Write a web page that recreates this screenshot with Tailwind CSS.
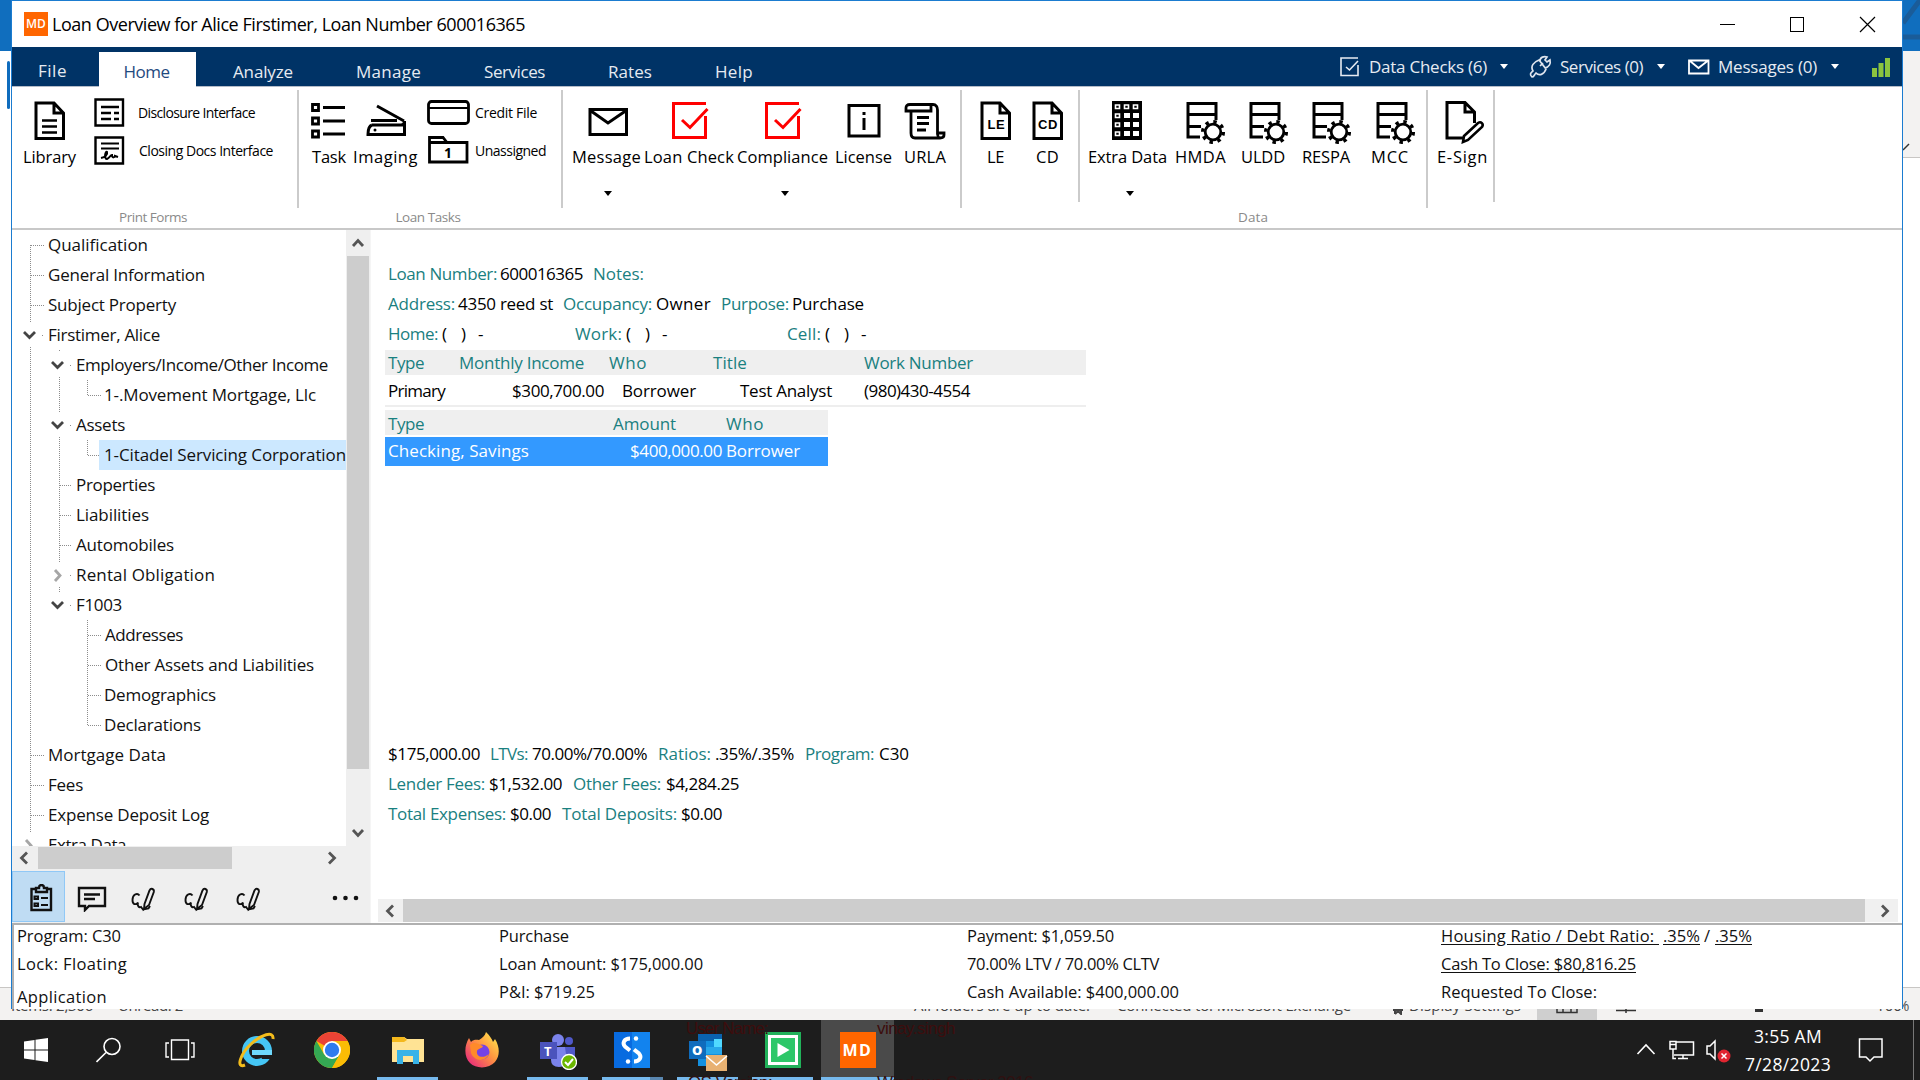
<!DOCTYPE html>
<html lang="en">
<head>
<meta charset="utf-8">
<title>Loan Overview</title>
<script src="https://cdn.jsdelivr.net/npm/@tailwindcss/browser@4"></script>
</head>
<body class="h-[1080px] w-[1920px] overflow-hidden bg-white font-['Open_Sans','Noto_Sans',sans-serif] text-[17px] leading-6 text-black">
<svg class="hidden">
  <symbol id="page" viewBox="0 0 44 44"><path d="M8 3H26L35.500 13V38.500H8Z M26 3V13H35.500" fill="none" stroke="#000" stroke-width="3"/></symbol>
  <symbol id="check" viewBox="0 0 44 44"><path d="M38 3.500H5.500V37.500H37.500V16M14 20L22 27.500L39.500 9" fill="none" stroke="#f00" stroke-width="3"/></symbol>
  <symbol id="dbgear" viewBox="0 0 44 44"><path d="M32 20V3.500H4V37H16M4 14.500H32M4 26.500H17" fill="none" stroke="#000" stroke-width="3"/><circle cx="29" cy="32" r="10.300" fill="none" stroke="#000" stroke-width="3.500" stroke-dasharray="3.400 4.690"/><circle cx="29" cy="32" r="7.800" fill="#fff" stroke="#000" stroke-width="2.800"/></symbol>
  <symbol id="pen" viewBox="0 0 28 26"><path d="M10.500 9.500C8 6 3.500 9 3.500 14C3.500 19 7 19 9 16.500C8 20 10 22 12 21L14 23.500L19.500 22.500L21 20" fill="none" stroke="#111" stroke-width="1.900"/><path d="M15.500 18L20.500 4.500C22 1.500 25.500 3 24.800 6L20 19L15 23Z" fill="none" stroke="#111" stroke-width="1.900"/></symbol>
</svg>

<div class="relative flex h-[1020px] w-[1920px]">
  <!-- mail client behind, left edge -->
  <div class="flex w-[11px] flex-col">
    <div class="h-[51px] bg-[#106ebe]"></div>
    <div class="mt-[10px] ml-[7px] h-[48px] w-[3px] rounded bg-[#0f6cbd]"></div>
    <div class="mt-[878px] h-[33px] border-t border-[#c8c6c4] bg-[#f3f2f1]"></div>
  </div>

  <div class="flex w-[1892px] flex-col">
    <main class="flex h-[1009px] w-[1892px] flex-col overflow-hidden border-x border-t border-[#1b7cd0] bg-white">
      <!-- title bar -->
      <header class="flex h-[46px] shrink-0 items-center">
        <div class="ml-[12px] flex h-6 w-6 items-center justify-center bg-[#ff6600] text-[12px] font-semibold text-white">MD</div>
        <div class="fit ml-[4px] w-[473px] text-[18px]">Loan Overview for Alice Firstimer, Loan Number 600016365</div>
        <svg class="ml-[1194px] h-[20px] w-[160px]" fill="none" stroke="#000" shape-rendering="crispEdges"><path d="M1 10.500H16M71.500 3.500H84.500V17.500H71.500Z"/><path d="M141 3L156 18M156 3L141 18" shape-rendering="auto" stroke-width="1.200"/></svg>
      </header>

      <!-- menu tabs -->
      <nav class="flex h-[40px] shrink-0 items-center border-b border-[#b4bcc8] bg-[#003366] text-[#e6ebf2]">
        <span class="fit mt-[8px] ml-[26px] w-[29px]">File</span>
        <span class="mt-[6px] ml-[32px] flex h-[35px] w-[97px] items-center justify-center bg-white pt-[4px] pr-[2px] text-[#1f4a80]"><span class="fit w-[46px]">Home</span></span>
        <span class="fit mt-[10px] ml-[37px] w-[60px]">Analyze</span>
        <span class="fit mt-[10px] ml-[63px] w-[65px]">Manage</span>
        <span class="fit mt-[10px] ml-[63px] w-[61px]">Services</span>
        <span class="fit mt-[10px] ml-[63px] w-[44px]">Rates</span>
        <span class="fit mt-[10px] ml-[63px] w-[38px]">Help</span>
        <svg class="ml-[587px] h-5 w-5" fill="none" stroke="#e6ebf2" stroke-width="1.600"><path d="M18 1H1V18.500H18V8M6 10L9.500 13L18 4"/></svg>
        <span class="fit ml-[9px] w-[118px]">Data Checks (6)</span>
        <svg class="ml-[13px] h-[5px] w-2" fill="#fff"><path d="M0 0H8L4 5Z"/></svg>
        <svg class="ml-[21px] h-6 w-[23px]" fill="none" stroke="#dfe5ee" stroke-width="1.700"><path d="M3 22C0 19 2 18 4 16C1 11 5 7 10 5L17 14C15 20 10 21 7 18C5 20 5 22 3 22ZM11 6C11 2 15 1 18 2L16 5L18 7L21 5C22 9 20 12 16 13M14 8L11 11"/></svg>
        <span class="fit ml-[8px] w-[83px]">Services (0)</span>
        <svg class="ml-[14px] h-[5px] w-2" fill="#fff"><path d="M0 0H8L4 5Z"/></svg>
        <svg class="ml-[23px] h-4 w-[22px]" fill="none" stroke="#fff" stroke-width="1.800"><path d="M1 1.500H20.500V14.500H1ZM2 2L10.500 9L19.500 2"/></svg>
        <span class="fit ml-[8px] w-[99px]">Messages (0)</span>
        <svg class="ml-[14px] h-[5px] w-2" fill="#fff"><path d="M0 0H8L4 5Z"/></svg>
        <svg class="ml-[33px] h-5 w-[19px]" fill="#8bc53f"><path d="M0 11H5V20H0ZM6.500 6H11.500V20H6.500ZM13 1H18V20H13Z"/></svg>
      </nav>

      <!-- ribbon -->
      <section class="flex h-[143px] shrink-0 border-b-2 border-[#c8c8c8] text-[16.5px]">
        <div class="w-[285px]">
          <div class="flex h-[118px] pt-[13px]">
            <div class="ml-[11px] flex w-[53px] flex-col items-center"><svg class="h-11 w-11" fill="none" stroke="#000" stroke-width="3"><use href="#page"/><path d="M14 20.500H29M14 26.500H29M14 32.500H29" stroke-width="2.500"/></svg><span class="fit mt-px w-[53px]">Library</span></div>
            <div class="-mt-[2px] ml-[18px] flex flex-col gap-[9px] text-[14px]">
              <div class="flex h-[29px] items-center"><svg class="h-[29px] w-[31px]" fill="none" stroke="#000" stroke-width="2.400"><path d="M1.500 1.500H29V27.500H1.500Z"/><path d="M7 9H25M7 15H17M20 15H25M7 21H17M20 21H25"/></svg><span class="fit ml-[13px] w-[117px]">Disclosure Interface</span></div>
              <div class="flex h-[29px] items-center"><svg class="h-[29px] w-[31px]" fill="none" stroke="#000" stroke-width="2.400"><path d="M1.500 1.500H29V27.500H1.500Z"/><path d="M7 7.500H25M7 12.500H25M7 22C11 21 14 19 13 16C11 15 10 23 13 23C16 22 16 19 18 19C18 23 21 21 21 20L24 21" stroke-width="2"/></svg><span class="fit ml-[14px] w-[134px]">Closing Docs Interface</span></div>
            </div>
          </div>
          <div class="flex justify-center pr-[3px] text-[13.5px] text-[#8a8a8a]"><span class="fit w-[68px]">Print Forms</span></div>
        </div>
        <div class="mt-[3px] h-[118px] w-[2px] bg-[#cbcbcb]"></div>
        <div class="w-[262px]">
          <div class="flex h-[118px] pt-[13px]">
            <div class="ml-[13px] flex w-[34px] flex-col items-center"><svg class="h-11 w-11 shrink-0" fill="none" stroke="#000" stroke-width="2.800"><path d="M5.500 5.500H11.500V11.500H5.500ZM5.500 19H11.500V25H5.500ZM5.500 32H11.500V38H5.500ZM16 8.500H38M16 22H38M16 35H38" transform="translate(0 -1)"/></svg><span class="fit mt-px w-[34px]">Task</span></div>
            <div class="ml-[7px] flex w-[65px] flex-col items-center"><svg class="h-11 w-11" fill="none" stroke="#000" stroke-width="3"><path d="M13 6L40 21M7 20.500H33M8 25H37Q40.500 25 40.500 21M8 25C5 26 4 30 4 34.500H40.500V21"/><circle cx="11" cy="30" r="1.500" fill="#000" stroke="none"/></svg><span class="fit mt-px w-[65px]">Imaging</span></div>
            <div class="-mt-[2px] ml-[9px] flex flex-col gap-[9px] text-[14px]">
              <div class="flex h-[29px] items-center"><svg class="h-[29px] w-[44px]" fill="none" stroke="#000" stroke-width="2.800"><rect x="1.500" y="3.500" width="40" height="22" rx="3"/><path d="M2 10H41" stroke-width="2.200"/></svg><span class="fit ml-[4px] w-[62px]">Credit File</span></div>
              <div class="flex h-[29px] items-center"><svg class="h-[29px] w-[44px]" fill="none" stroke="#000" stroke-width="2.800"><path d="M2.500 6.500H40V26H2.500V1.500H16L20 6.500"/><path d="M3 6.500H20" stroke-width="2"/><text x="17" y="22" font-family="Open Sans" font-size="14" font-weight="700" fill="#000" stroke="none">1</text></svg><span class="fit ml-[4px] w-[71px]">Unassigned</span></div>
            </div>
          </div>
          <div class="flex justify-center pr-[4px] text-[13.5px] text-[#8a8a8a]"><span class="fit w-[65px]">Loan Tasks</span></div>
        </div>
        <div class="mt-[3px] h-[118px] w-[2px] bg-[#cbcbcb]"></div>
        <div class="flex w-[397px] pt-[13px]">
          <div class="ml-[9px] flex w-[69px] flex-col items-center"><svg class="ml-[2px] h-11 w-11" fill="none" stroke="#000" stroke-width="3"><path d="M4 9.500H40.500V34.500H4ZM5 11L22 23L39.500 11"/></svg><span class="fit mt-px w-[69px]">Message</span><svg class="mt-[22px] ml-[2px] h-[5px] w-2"><path d="M0 0H8L4 5Z"/></svg></div>
          <div class="ml-[3px] flex w-[90px] flex-col items-center"><svg class="ml-[2px] h-11 w-11"><use href="#check"/></svg><span class="fit mt-px w-[90px]">Loan Check</span></div>
          <div class="ml-[3px] flex w-[91px] flex-col items-center"><svg class="h-11 w-11"><use href="#check"/></svg><span class="fit mt-px w-[91px]">Compliance</span><svg class="mt-[22px] ml-[4px] h-[5px] w-2"><path d="M0 0H8L4 5Z"/></svg></div>
          <div class="ml-[7px] flex w-[57px] flex-col items-center"><svg class="h-11 w-11" fill="none" stroke="#000" stroke-width="3"><path d="M7 5.500H37V36H7ZM22 18V30M22 12V15"/></svg><span class="fit mt-px w-[57px]">License</span></div>
          <div class="ml-[12px] flex w-[42px] flex-col items-center"><svg class="h-11 w-11 shrink-0" fill="none" stroke="#000" stroke-width="2.800"><path d="M30 4.500H7C4 4.500 3 6 3 8V11H28V5M30 4.500C33 4.500 34.500 7 34.500 10V33H41V35C41 37 40 38 37 38H12C9 38 8 36 8 33V12M34.500 32C34.500 36 35 38 37 38M14 17.500H26M14 23.500H26M14 30H23"/></svg><span class="fit mt-px w-[42px]">URLA</span></div>
        </div>
        <div class="mt-[3px] h-[118px] w-[2px] bg-[#cbcbcb]"></div>
        <div class="flex w-[116px] pt-[13px]">
          <div class="ml-[25px] flex w-[17px] flex-col items-center"><svg class="h-11 w-11 shrink-0"><use href="#page"/><text x="13.500" y="29" font-family="Liberation Sans" font-size="13" font-weight="700" letter-spacing="0.500">LE</text></svg><span class="fit mt-px w-[17px]">LE</span></div>
          <div class="ml-[32px] flex w-[23px] flex-col items-center"><svg class="h-11 w-11 shrink-0"><use href="#page"/><text x="12" y="29" font-family="Liberation Sans" font-size="13" font-weight="700" letter-spacing="0.500">CD</text></svg><span class="fit mt-px w-[23px]">CD</span></div>
        </div>
        <div class="mt-[3px] h-[112px] w-[2px] bg-[#cbcbcb]"></div>
        <div class="w-[346px]">
          <div class="flex h-[118px] pt-[13px]">
            <div class="ml-[8px] flex w-[79px] flex-col items-center"><svg class="h-11 w-11"><path d="M6 1H36V40H6Z"/><path d="M9.500 5h4v3.500h-4zM18.500 5h4v3.500h-4zM27.500 5h4v3.500h-4zM9.500 14h4v3.500h-4zM9.500 23h4v3.500h-4zM9.500 32h4v3.500h-4z" fill="#000" stroke="#fff" stroke-width="1.600"/><path d="M18 13h6v5h-6zM27 13h6v5h-6zM18 22h6v5h-6zM27 22h6v5h-6zM18 31h6v5h-6zM27 31h6v5h-6z" fill="#fff"/></svg><span class="fit mt-px w-[79px]">Extra Data</span><svg class="mt-[22px] ml-[4px] h-[5px] w-2"><path d="M0 0H8L4 5Z"/></svg></div>
            <div class="ml-[8px] flex w-[51px] flex-col items-center"><svg class="ml-[10px] h-11 w-11 shrink-0"><use href="#dbgear"/></svg><span class="fit mt-px w-[51px]">HMDA</span></div>
            <div class="ml-[15px] flex w-[44px] flex-col items-center"><svg class="ml-[11px] h-11 w-11 shrink-0"><use href="#dbgear"/></svg><span class="fit mt-px w-[44px]">ULDD</span></div>
            <div class="ml-[17px] flex w-[48px] flex-col items-center"><svg class="ml-[11px] h-11 w-11 shrink-0"><use href="#dbgear"/></svg><span class="fit mt-px w-[48px]">RESPA</span></div>
            <div class="ml-[21px] flex w-[38px] flex-col items-center"><svg class="ml-[11px] h-11 w-11 shrink-0"><use href="#dbgear"/></svg><span class="fit mt-px w-[38px]">MCC</span></div>
          </div>
          <div class="flex justify-center text-[13.5px] text-[#8a8a8a]"><span class="fit w-[30px]">Data</span></div>
        </div>
        <div class="mt-[3px] h-[118px] w-[2px] bg-[#cbcbcb]"></div>
        <div class="flex w-[65px] pt-[13px]">
          <div class="ml-[9px] flex w-[51px] flex-col items-center"><svg class="ml-[5px] h-11 w-11" fill="none" stroke="#000" stroke-width="3"><path d="M23 38H4V2.500H22L31.500 12V23M22 2.500V12H31.500"/><path d="M21 36L35 23C38 21 41 24 39 27L25 40L20 42Z" fill="#fff" stroke-width="2.600"/></svg><span class="fit mt-px w-[51px]">E-Sign</span></div>
        </div>
        <div class="mt-[3px] h-[112px] w-[2px] bg-[#cbcbcb]"></div>
      </section>

      <!-- work area -->
      <div class="flex h-[693px] shrink-0">
        <aside class="flex w-[358px] flex-col bg-[#efefef] text-[#111]">
          <div class="flex h-[616px]">
            <div class="relative h-[616px] w-[334px] overflow-hidden bg-white">
              <svg class="absolute top-0 left-0 h-[616px] w-[334px]" fill="none">
                <g stroke="#8c8c8c" stroke-width="1" stroke-dasharray="1 1" shape-rendering="crispEdges"><path d="M18.500 15V92M18.500 117V603M47.500 120V122M47.500 147V182M47.500 207V333M47.500 357V362M75.500 150V166M75.500 210V226M75.500 390V496"/><path d="M19 15.500H32M19 45.500H32M19 75.500H32M30 105.500H32M58 135.500H60M76 165.500H89M58 195.500H60M76 225.500H89M48 255.500H60M48 285.500H60M48 315.500H60M58 345.500H60M58 375.500H60M76 405.500H89M76 435.500H89M76 465.500H89M76 495.500H89M19 525.500H32M19 555.500H32M19 585.500H32"/></g>
                <g stroke="#444" stroke-width="2.800"><path d="M12 102L17.500 107.500L23 102M40 132L45.500 137.500L51 132M40 192L45.500 197.500L51 192M40 372L45.500 377.500L51 372"/><path d="M43 340L48 345.500L43 351M14 610L19 615.500L14 621" stroke="#a6a6a6"/></g>
              </svg>
              <div class="relative flex flex-col">
                <div class="flex h-[30px] items-center pl-[36px]"><span class="fit w-[100px]">Qualification</span></div>
                <div class="flex h-[30px] items-center pl-[36px]"><span class="fit w-[157px]">General Information</span></div>
                <div class="flex h-[30px] items-center pl-[36px]"><span class="fit w-[128px]">Subject Property</span></div>
                <div class="flex h-[30px] items-center pl-[36px]"><span class="fit w-[112px]">Firstimer, Alice</span></div>
                <div class="flex h-[30px] items-center pl-[64px]"><span class="fit w-[252px]">Employers/Income/Other Income</span></div>
                <div class="flex h-[30px] items-center pl-[92px]"><span class="fit w-[212px]">1-.Movement Mortgage, Llc</span></div>
                <div class="flex h-[30px] items-center pl-[64px]"><span class="fit w-[49px]">Assets</span></div>
                <div class="ml-[87px] flex h-[30px] items-center bg-[#cce8ff] pl-[5px]"><span class="fit w-[242px]">1-Citadel Servicing Corporation</span></div>
                <div class="flex h-[30px] items-center pl-[64px]"><span class="fit w-[79px]">Properties</span></div>
                <div class="flex h-[30px] items-center pl-[64px]"><span class="fit w-[73px]">Liabilities</span></div>
                <div class="flex h-[30px] items-center pl-[64px]"><span class="fit w-[98px]">Automobiles</span></div>
                <div class="flex h-[30px] items-center pl-[64px]"><span class="fit w-[139px]">Rental Obligation</span></div>
                <div class="flex h-[30px] items-center pl-[64px]"><span class="fit w-[46px]">F1003</span></div>
                <div class="flex h-[30px] items-center pl-[93px]"><span class="fit w-[78px]">Addresses</span></div>
                <div class="flex h-[30px] items-center pl-[93px]"><span class="fit w-[209px]">Other Assets and Liabilities</span></div>
                <div class="flex h-[30px] items-center pl-[92px]"><span class="fit w-[112px]">Demographics</span></div>
                <div class="flex h-[30px] items-center pl-[92px]"><span class="fit w-[97px]">Declarations</span></div>
                <div class="flex h-[30px] items-center pl-[36px]"><span class="fit w-[118px]">Mortgage Data</span></div>
                <div class="flex h-[30px] items-center pl-[36px]"><span class="fit w-[35px]">Fees</span></div>
                <div class="flex h-[30px] items-center pl-[36px]"><span class="fit w-[161px]">Expense Deposit Log</span></div>
                <div class="flex h-[30px] items-center pl-[36px]"><span class="fit w-[78px]">Extra Data</span></div>
              </div>
            </div>
            <div class="flex w-[24px] flex-col items-center">
              <svg class="h-[26px] w-[22px]" fill="none" stroke="#555" stroke-width="2.800"><path d="M6 16L11 10.500L16 16"/></svg>
              <div class="h-[513px] w-[22px] bg-[#cdcdcd]"></div>
              <svg class="mt-[51px] h-[26px] w-[22px]" fill="none" stroke="#555" stroke-width="2.800"><path d="M6 10L11 15.500L16 10"/></svg>
            </div>
          </div>
          <div class="flex h-[24px] items-center">
            <svg class="h-[22px] w-[26px]" fill="none" stroke="#555" stroke-width="2.800"><path d="M15 5.500L9.500 11L15 16.500"/></svg>
            <div class="h-[22px] w-[194px] bg-[#cdcdcd]"></div>
            <svg class="ml-[88px] h-[22px] w-[26px]" fill="none" stroke="#555" stroke-width="2.800"><path d="M9 5.500L14.500 11L9 16.500"/></svg>
          </div>
          <div class="flex h-[53px] items-center">
            <div class="flex h-[51px] w-[53px] items-center justify-center border border-[#90c8f6] bg-[#bfdcf3] pt-[2px] pl-[5px]"><svg class="h-[28px] w-[24px]" fill="none" stroke="#111" stroke-width="2.400"><path d="M7 5H2.500V26H22V5H18M7 8V4H10C10 0 15 0 15 4H18V8Z"/><path d="M5.500 12.500H9V15H5.500ZM12 14H19M5.500 19.500H9V22H5.500ZM12 21H19" stroke-width="2"/></svg></div>
            <svg class="mt-[3px] ml-[12px] h-[28px] w-[30px]" fill="none" stroke="#111" stroke-width="2.400"><path d="M2 4H28V22H12L8 26V22H2ZM7 10.500H23M7 15H18"/></svg>
            <svg class="mt-[4px] ml-[22px] h-[26px] w-[28px]"><use href="#pen"/></svg>
            <svg class="mt-[4px] ml-[25px] h-[26px] w-[28px]"><use href="#pen"/></svg>
            <svg class="mt-[4px] ml-[24px] h-[26px] w-[28px]"><use href="#pen"/></svg>
            <svg class="mt-[3px] ml-[70px] h-[6px] w-[28px]" fill="#111"><circle cx="3" cy="3" r="2.300"/><circle cx="13.500" cy="3" r="2.300"/><circle cx="24" cy="3" r="2.300"/></svg>
          </div>
        </aside>

        <section class="flex w-[1532px] flex-col border-l border-[#f5f5f5] pt-[29px] text-[#1a8080]">
          <div class="flex h-[30px] items-center pl-[17px]"><span class="fit w-[109px]">Loan Number:</span><span class="fit ml-[3px] w-[83px] text-black">600016365</span><span class="fit ml-[10px] w-[51px]">Notes:</span></div>
          <div class="flex h-[30px] items-center pl-[17px]"><span class="fit w-[67px]">Address:</span><span class="fit ml-[3px] w-[95px] text-black">4350 reed st</span><span class="fit ml-[10px] w-[89px]">Occupancy:</span><span class="fit ml-[4px] w-[55px] text-black">Owner</span><span class="fit ml-[10px] w-[68px]">Purpose:</span><span class="fit ml-[3px] w-[72px] text-black">Purchase</span></div>
          <div class="flex h-[30px] items-center pl-[17px]"><span class="fit w-[50px]">Home:</span><span class="ml-[4px] flex w-[24px] justify-between text-black"><span>(</span><span>)</span></span><span class="ml-[12px] w-[6px] text-black">-</span><span class="fit ml-[91px] w-[47px]">Work:</span><span class="ml-[4px] flex w-[24px] justify-between text-black"><span>(</span><span>)</span></span><span class="ml-[12px] w-[6px] text-black">-</span><span class="fit ml-[119px] w-[34px]">Cell:</span><span class="ml-[4px] flex w-[24px] justify-between text-black"><span>(</span><span>)</span></span><span class="ml-[12px] w-[6px] text-black">-</span></div>
          <div class="mt-px ml-[14px] flex h-[25px] w-[701px] items-center bg-[#efefef] pt-px pl-[3px]"><span class="fit w-[36px]">Type</span><span class="fit ml-[35px] w-[125px]">Monthly Income</span><span class="fit ml-[25px] w-[38px]">Who</span><span class="fit ml-[66px] w-[34px]">Title</span><span class="fit ml-[117px] w-[109px]">Work Number</span></div>
          <div class="ml-[14px] flex h-[32px] w-[701px] items-center border-b-2 border-[#eee] pt-px pl-[3px] text-black"><span class="fit w-[57px]">Primary</span><span class="fit ml-[67px] w-[92px]">$300,700.00</span><span class="fit ml-[18px] w-[74px]">Borrower</span><span class="fit ml-[44px] w-[92px]">Test Analyst</span><span class="fit ml-[32px] w-[106px]">(980)430-4554</span></div>
          <div class="mt-[3px] ml-[14px] flex h-[25px] w-[443px] items-center bg-[#efefef] pt-[2px] pl-[3px]"><span class="fit w-[36px]">Type</span><span class="fit ml-[189px] w-[63px]">Amount</span><span class="fit ml-[50px] w-[38px]">Who</span></div>
          <div class="mt-[2px] ml-[14px] flex h-[29px] w-[443px] items-center bg-[#3399ff] pb-[2px] pl-[3px] text-white"><span class="fit w-[141px]">Checking, Savings</span><span class="fit ml-[101px] w-[92px]">$400,000.00</span><span class="fit ml-[4px] w-[74px]">Borrower</span></div>
          <div class="mt-[273px] flex h-[30px] items-center pl-[17px]"><span class="fit w-[92px] text-black">$175,000.00</span><span class="fit ml-[10px] w-[38px]">LTVs:</span><span class="fit ml-[4px] w-[115px] text-black">70.00%/70.00%</span><span class="fit ml-[11px] w-[53px]">Ratios:</span><span class="fit ml-[4px] w-[79px] text-black">.35%/.35%</span><span class="fit ml-[11px] w-[69px]">Program:</span><span class="fit ml-[5px] w-[30px] text-black">C30</span></div>
          <div class="flex h-[30px] items-center pl-[17px]"><span class="fit w-[97px]">Lender Fees:</span><span class="fit ml-[4px] w-[73px] text-black">$1,532.00</span><span class="fit ml-[11px] w-[88px]">Other Fees:</span><span class="fit ml-[5px] w-[73px] text-black">$4,284.25</span></div>
          <div class="flex h-[30px] items-center pl-[17px]"><span class="fit w-[118px]">Total Expenses:</span><span class="fit ml-[4px] w-[41px] text-black">$0.00</span><span class="fit ml-[11px] w-[115px]">Total Deposits:</span><span class="fit ml-[4px] w-[41px] text-black">$0.00</span></div>
          <div class="mt-[70px] ml-[7px] flex h-[23px] w-[1520px] items-center bg-[#f0f0f0]">
            <svg class="h-[22px] w-[25px]" fill="none" stroke="#555" stroke-width="2.800"><path d="M15 5.500L9.500 11L15 16.500"/></svg>
            <div class="h-[23px] w-[1462px] bg-[#cdcdcd]"></div>
            <svg class="h-[22px] w-[32px]" fill="none" stroke="#555" stroke-width="2.800"><path d="M17 5.500L22.500 11L17 16.500"/></svg>
          </div>
        </section>
      </div>

      <!-- loan summary -->
      <footer class="flex h-[86px] shrink-0 border-t-2 border-l-2 border-[#b0b0b0] text-[16.5px] text-[#111]">
        <div class="-mt-px flex w-[482px] flex-col pl-[3px]"><span class="fit w-[104px]">Program: C30</span><span class="fit mt-[4px] w-[110px]">Lock: Floating</span><span class="fit mt-[9px] w-[90px]">Application</span></div>
        <div class="-mt-px flex w-[468px] flex-col gap-[4px] pl-[3px]"><span class="fit w-[70px]">Purchase</span><span class="fit w-[204px]">Loan Amount: $175,000.00</span><span class="fit w-[96px]">P&amp;I: $719.25</span></div>
        <div class="-mt-px flex w-[474px] flex-col gap-[4px] pl-[3px]"><span class="fit w-[147px]">Payment: $1,059.50</span><span class="fit w-[192px]">70.00% LTV / 70.00% CLTV</span><span class="fit w-[212px]">Cash Available: $400,000.00</span></div>
        <div class="-mt-px flex flex-col gap-[4px] pl-[3px]"><span class="flex"><span class="fit w-[218px] underline underline-offset-2">Housing Ratio / Debt Ratio:&nbsp;</span><span class="fit ml-[4px] w-[37px] underline underline-offset-2">.35%</span><span class="ml-[4px] w-[7px]">/</span><span class="fit ml-[4px] w-[37px] underline underline-offset-2">.35%</span></span><span class="fit w-[195px] underline underline-offset-2">Cash To Close: $80,816.25</span><span class="fit w-[156px]">Requested To Close:</span></div>
      </footer>
    </main>

    <!-- mail client status bar, mostly covered -->
    <div class="flex h-[11px] w-[1892px] overflow-hidden bg-[#f3f2f1] text-[15px] leading-5 text-[#444]">
      <span class="fit -mt-[14px] w-[82px]">Items: 2,306</span><span class="fit -mt-[14px] ml-[25px] w-[65px]">Unread: 2</span>
      <span class="fit -mt-[14px] ml-[731px] w-[176px]">All folders are up to date.</span><span class="fit -mt-[14px] ml-[27px] w-[234px]">Connected to: Microsoft Exchange</span>
      <svg class="ml-[41px] h-[6px] w-[12px]" fill="none" stroke="#444" stroke-width="2"><path d="M1 1H11M3 1V5M9 1V5L6 2L3 5"/></svg>
      <span class="fit -mt-[14px] ml-[5px] w-[112px]">Display Settings</span>
      <span class="ml-[16px] flex w-[60px] justify-center bg-[#cfcfcf]"><svg class="h-[5px] w-[22px]" fill="none" stroke="#333" stroke-width="1.500"><path d="M1 0V3.500H21V0M7 0V3M15 0V3"/></svg></span>
      <svg class="ml-[19px] h-[5px] w-[20px]" fill="none" stroke="#333" stroke-width="1.500"><path d="M0 1.500H20M10 0V4"/></svg>
      <span class="ml-[119px] h-[3px] w-[8px] bg-[#333]"></span>
      <span class="fit -mt-[14px] ml-[113px] w-[26px]">100</span>
    </div>
  </div>

  <!-- mail client behind, right edge -->
  <div class="flex w-[17px] flex-col">
    <svg class="h-[51px] w-[17px] bg-[#106ebe]" fill="none" stroke="#1a5c99" stroke-width="5"><path d="M0 23L17 0M0 37H17"/></svg>
    <div class="flex h-[107px] items-end border-b border-[#c8c6c4] bg-[#f3f2f1] pb-[6px]"><svg class="h-[8px] w-[8px]" fill="none" stroke="#333" stroke-width="1.500"><path d="M0 7L6 1"/></svg></div>
    <div class="mt-[829px] flex h-[33px] justify-start overflow-hidden border-t border-[#c8c6c4] bg-[#f3f2f1] pt-[7px] text-[15px] leading-5 text-[#555]"><span class="-ml-[6px]">%</span></div>
  </div>
</div>

<!-- taskbar -->
<div class="relative flex h-[60px] w-[1920px] items-center overflow-hidden bg-[#1d1d1d] text-white">
  <div class="absolute top-0 left-[686px] flex w-[400px] font-['Liberation_Sans',sans-serif] text-[17px] leading-[18px] text-[#3d0d0d]"><span class="fit w-[82px]">User Name:</span><span class="fit ml-[109px] w-[78px]">vinay.singh</span></div>
  <div class="absolute top-[54px] left-[688px] flex w-[400px] font-['Liberation_Sans',sans-serif] text-[17px] leading-[18px] text-[#301010]"><span class="fit w-[84px]">OS Version:</span><span class="fit ml-[105px] w-[156px]">Windows Server 2016</span></div>
  <svg class="ml-[24px] h-6 w-6" fill="#fff"><path d="M0 3.500L10.500 2V11.500H0ZM11.500 1.800L24 0V11.500H11.500ZM0 12.500H10.500V22L0 20.500ZM11.500 12.500H24V24L11.500 22.200Z"/></svg>
  <svg class="ml-[48px] h-[26px] w-[26px]" fill="none" stroke="#fff" stroke-width="1.600"><circle cx="16" cy="9.500" r="8"/><path d="M10 15.500L0.500 25"/></svg>
  <svg class="ml-[43px] h-[22px] w-[30px]" fill="none" stroke="#fff" stroke-width="1.400"><path d="M6.500 1H23.500V20.500H6.500ZM4 4H1V18H4M26 4H29V18H26"/></svg>
  <svg class="ml-[43px] h-[36px] w-[38px]" fill="none"><circle cx="19" cy="19" r="11.500" stroke="#45c6f5" stroke-width="7"/><path d="M14 20.500H34" stroke="#6fd8fb" stroke-width="5"/><path d="M22 23H35V27H24Z" fill="#1d1d1d"/><path d="M7 33C-3 37 3 21 13 12C23 3 36 -2 35 7" stroke="#f3bc1c" stroke-width="3"/></svg>
  <svg class="ml-[38px] h-9 w-9" viewBox="0 0 36 36"><circle cx="18" cy="18" r="18" fill="#fbbc05"/><path d="M18 18L2.400 9A18 18 0 0 1 33.600 9H18Z" fill="#ea4335"/><path d="M18 36A18 18 0 0 1 2.400 9L10.200 22.500L18 27L25.800 22.500Z" fill="#34a853"/><path d="M18 36L25.800 22.500A9 9 0 0 0 18 9H33.600A18 18 0 0 1 18 36Z" fill="#fbbc05"/><circle cx="18" cy="18" r="9" fill="#fff"/><circle cx="18" cy="18" r="7.200" fill="#2f7bee"/></svg>
  <div class="ml-[27px] flex h-[60px] w-[61px] justify-center border-b-3 border-[#76b9ed] pt-[16px]"><svg class="h-[28px] w-[32px]"><path d="M0 2Q0 1 1 1H12L15 3H32V26H0Z" fill="#ffe394"/><path d="M0 1H12L15 4L12 6H0Z" fill="#f4b81c"/><path d="M5 28V14H27V28H21V20H11V28Z" fill="#38b3e8"/></svg></div>
  <svg class="ml-[27px] h-[36px] w-[34px]"><defs><linearGradient id="ff" x1="1" y1="0" x2="0" y2="1"><stop offset="0" stop-color="#fff44f"/><stop offset=".45" stop-color="#ff9640"/><stop offset="1" stop-color="#e31587"/></linearGradient></defs><path d="M21 0C25 4 27 7 28 10L30 7C35 15 35 24 30 30C24 37 11 37 5 31C-1 25 -1 14 4 6L6 10C9 7 12 8 14 8C17 6 20 4 21 0Z" fill="url(#ff)"/><circle cx="17" cy="20" r="7.500" fill="#7542e5"/><path d="M5 13C9 9 13 12 18 14C17 17 13 16 12 19C11 25 18 27 24 22C20 31 9 29 6 21Z" fill="#ff8a2a"/></svg>
  <div class="ml-[28px] flex h-[60px] w-[61px] justify-center border-b-3 border-[#76b9ed] pt-[14px]"><svg class="h-[36px] w-[38px]"><circle cx="19" cy="6" r="6" fill="#7b83eb"/><circle cx="30" cy="7" r="4" fill="#5059c9"/><path d="M12 13H28V26Q28 33 20 33Q12 33 12 26Z" fill="#7b83eb"/><path d="M26 13H36V23Q36 29 28 28Z" fill="#5059c9"/><path d="M1 8H18V25H1Z" fill="#4b53bc"/><text x="5" y="21.500" font-family="Open Sans" font-size="13" font-weight="700" fill="#fff">T</text><circle cx="30" cy="28" r="7.500" fill="#6bb700" stroke="#fff" stroke-width="1.300"/><path d="M26 28L29 31L34 25" fill="none" stroke="#fff" stroke-width="2"/></svg></div>
  <div class="ml-[14px] flex h-[60px] w-[48px] justify-end border-b-3 border-[#76b9ed] pt-[12px]"><svg class="h-9 w-9 bg-[#1283ee]" fill="none" stroke="#fff" stroke-width="4"><path d="M0 0H18V36H0Z" fill="#086be0" stroke="none"/><path d="M16 6.500C10 6.500 8 11 11 14.500L16 18.500M20 29.500C26 29.500 28 25 25 21.500L20 17.500"/><circle cx="22" cy="6.500" r="2.200" fill="#fff" stroke="none"/><circle cx="14" cy="29.500" r="2.200" fill="#fff" stroke="none"/></svg></div>
  <div class="h-[60px] w-[13px] border-b-3 border-[#5a87b0]"></div>
  <div class="ml-[14px] flex h-[60px] w-[61px] justify-center border-b-3 border-[#76b9ed] pt-[14px]"><svg class="h-[38px] w-[40px]"><path d="M10 0H34V32H10Z" fill="#1490df"/><path d="M10 0H34V7H10Z" fill="#0a62ae"/><path d="M26 5H34V13H26Z" fill="#50d9ff"/><path d="M18 13H34V20H18Z" fill="#28a8ea"/><path d="M1 7H18V25H1Z" fill="#0f6cbd"/><text x="4" y="20.500" font-family="Open Sans" font-size="13" font-weight="800" fill="#fff">O</text><path d="M18 21H39V37H18Z" fill="#e8b172"/><path d="M18 22L28.500 31L39 22" fill="none" stroke="#fff" stroke-width="1.600"/></svg></div>
  <div class="ml-[14px] flex h-[60px] w-[61px] justify-center border-b-3 border-[#76b9ed] pt-[12px]"><svg class="h-9 w-9 bg-[#21b25a]"><path d="M4.500 4.500H31.500V31.500H4.500Z" fill="#2dc768" stroke="#fff" stroke-width="3"/><path d="M12.500 11L24.500 18L12.500 25Z" fill="#fff"/></svg></div>
  <div class="ml-[8px] flex h-[60px] w-[73px] justify-center border-b-3 border-[#76b9ed] bg-[#4a4a4a] pt-[12px]"><div class="flex h-9 w-9 items-center justify-center bg-[#ff6600] text-[16px] font-bold"><span class="fit w-[30px]">MD</span></div></div>

  <svg class="ml-[742px] h-[14px] w-[20px]" fill="none" stroke="#fff" stroke-width="1.600"><path d="M1.500 11L10 2L18.500 11"/></svg>
  <svg class="ml-[13px] h-[20px] w-[26px]" fill="none" stroke="#fff" stroke-width="1.500"><path d="M7 2H24.500V15H5M14 15V19M9 18.500H19M1 1.500H7V9H1ZM1 4.500H7M4 9V18.500H7"/></svg>
  <svg class="ml-[11px] h-[26px] w-[28px]" fill="none" stroke="#fff" stroke-width="1.500"><path d="M1 9H4L9 4V22L4 17H1Z"/><ellipse cx="18" cy="19" rx="6.500" ry="6.500" fill="#e02530" stroke="none"/><path d="M15.500 16.500L20.500 21.500M20.500 16.500L15.500 21.500"/></svg>
  <div class="ml-[11px] flex w-[86px] flex-col items-center gap-[4px] text-[17.5px]"><span class="fit w-[68px]">3:55 AM</span><span class="fit w-[86px]">7/28/2023</span></div>
  <svg class="ml-[27px] h-[26px] w-[26px]" fill="none" stroke="#fff" stroke-width="1.500"><path d="M1.500 2H24V20H16L12 24L8 20H1.500Z"/></svg>
  <div class="ml-[29px] h-[60px] w-px bg-[#777]"></div>
</div>

<script>
  // Track each label so that it fills the width of its box.
  function fitLabels() {
    document.querySelectorAll('.fit').forEach(function (el) {
      el.style.whiteSpace = 'nowrap';
      el.style.flexShrink = '0';
      el.style.letterSpacing = '0px';
      var r = document.createRange();
      r.selectNodeContents(el);
      var natural = r.getBoundingClientRect().width;
      el.style.letterSpacing = ((el.offsetWidth - natural) / el.textContent.length) + 'px';
    });
  }
  window.addEventListener('load', fitLabels);
  document.fonts.ready.then(fitLabels);
  // Refit when the page's styles arrive and change the body's size.
  new ResizeObserver(fitLabels).observe(document.body);
</script>
</body>
</html>
